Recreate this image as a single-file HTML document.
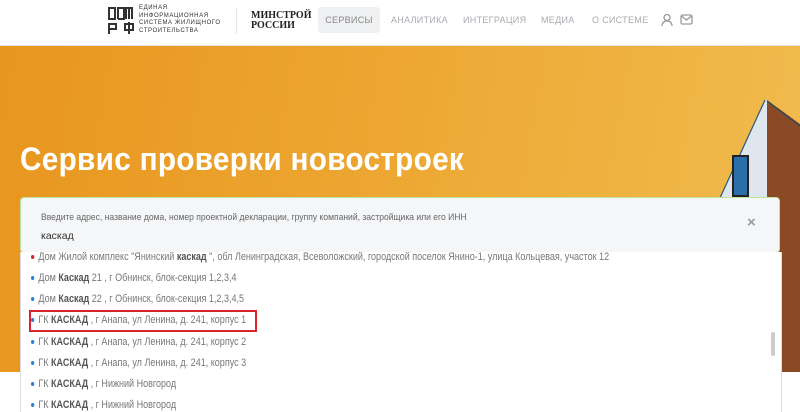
<!DOCTYPE html>
<html><head><meta charset="utf-8"><style>
body{margin:0;width:800px;height:405px;overflow:hidden;background:#fff;font-family:"Liberation Sans","DejaVu Sans",sans-serif;position:relative}
.hdr{position:absolute;left:0;top:0;width:800px;height:45px;background:#fff;border-bottom:1px solid #e5e5e5}
.hero{position:absolute;left:0;top:46px;width:800px;height:326px;background:linear-gradient(100deg,#e8961e 0%,#eda833 50%,#f0bc4f 100%);overflow:hidden}
.nav{position:absolute;top:7px;height:26px;font-size:9px;letter-spacing:.3px;color:#a8abb0;line-height:26px}
h1{position:absolute;left:20px;top:141px;margin:0;color:#fff;font-size:32px;font-weight:bold;letter-spacing:.3px;transform:scaleX(.93);transform-origin:0 0;white-space:nowrap}
.inp{position:absolute;left:20px;top:197px;width:758px;height:54px;background:#f5f6f8;border:1px solid #bfe39a;border-radius:4px}
.list{position:absolute;left:20px;top:252px;width:760px;height:160px;background:#fff;border-left:1px solid #ddd;border-right:1px solid #ddd;overflow:hidden}
.it{position:absolute;left:10px;font-size:11px;color:#777;white-space:nowrap;transform:scaleX(.82);transform-origin:0 50%}
.it b{color:#555}
.it:before{content:"";display:inline-block;width:4px;height:4px;border-radius:2px;background:#2b7de0;margin-right:5px;vertical-align:middle}
.it.r:before{background:#e02020}
</style></head><body>
<div class="hdr">
 <svg style="position:absolute;left:108px;top:5px" width="26" height="30" viewBox="0 0 26 30"><g fill="none" stroke="#333" stroke-width="2"><path d="M1 14V3h6v11M0 14h8M10 14V3h6v11H10M18 14V3h6v11M21 3v11"/><path d="M1 29V19h7v5H1M17 19h8v6h-8zM21 17v12"/></g></svg>
 <div style="position:absolute;left:139px;top:5px;font-size:6px;line-height:7.5px;color:#333;letter-spacing:.6px">ЕДИНАЯ<br>ИНФОРМАЦИОННАЯ<br>СИСТЕМА ЖИЛИЩНОГО<br>СТРОИТЕЛЬСТВА</div>
 <div style="position:absolute;left:236px;top:8px;width:1px;height:26px;background:#e5e5e5"></div>
 <div style="position:absolute;left:251px;top:11px;font-size:10px;line-height:10px;font-weight:bold;color:#222;font-family:'Liberation Serif',serif">МИНСТРОЙ<br>РОССИИ</div>
 <div class="nav" style="left:318px;width:62px;background:#eff0f2;border-radius:4px;text-align:center;color:#888">СЕРВИСЫ</div>
 <div class="nav" style="left:391px">АНАЛИТИКА</div>
 <div class="nav" style="left:463px">ИНТЕГРАЦИЯ</div>
 <div class="nav" style="left:541px">МЕДИА</div>
 <div class="nav" style="left:592px">О СИСТЕМЕ</div>
 <svg style="position:absolute;left:660px;top:13px" width="14" height="14" viewBox="0 0 14 14" fill="none" stroke="#999" stroke-width="1.3"><circle cx="7" cy="4.5" r="3"/><path d="M2 13c0-3 2-5 5-5s5 2 5 5"/></svg>
 <svg style="position:absolute;left:680px;top:13px" width="13" height="13" viewBox="0 0 13 13" fill="none" stroke="#999" stroke-width="1.3"><rect x="1" y="2" width="11" height="9" rx="1.5"/><path d="M1.5 3l5 4 5-4"/></svg>
</div>
<div class="hero">
 <svg style="position:absolute;left:0;top:0" width="800" height="326"><polygon points="765,54 767,54 767,326 640,326" fill="#dfe6ee"/><line x1="765" y1="54" x2="640" y2="326" stroke="#2a5a7a" stroke-width="1.2"/><polygon points="767,54 800,78 800,326 767,326" fill="#8a4a26"/><line x1="767" y1="55" x2="800" y2="80" stroke="#2a4a5a" stroke-width="1.2"/><rect x="733" y="110" width="15" height="40" fill="#2c6fa8" stroke="#222" stroke-width="2"/></svg>
</div>
<h1>Сервис проверки новостроек</h1>
<div class="inp">
 <div style="position:absolute;left:20px;top:14px;font-size:9.5px;color:#666;white-space:nowrap;transform:scaleX(.9);transform-origin:0 0">Введите адрес, название дома, номер проектной декларации, группу компаний, застройщика или его ИНН</div>
 <div style="position:absolute;left:20px;top:32px;font-size:10.5px;color:#333">каскад</div>
 <div style="position:absolute;left:726px;top:16px;font-size:15px;color:#999;font-weight:bold">×</div>
</div>
<div class="list">
 <div class="it r" style="top:-1px">Дом Жилой комплекс "Янинский <b>каскад</b> ", обл Ленинградская, Всеволожский, городской поселок Янино-1, улица Кольцевая, участок 12</div>
 <div class="it" style="top:20px">Дом <b>Каскад</b> 21 , г Обнинск, блок-секция 1,2,3,4</div>
 <div class="it" style="top:41px">Дом <b>Каскад</b> 22 , г Обнинск, блок-секция 1,2,3,4,5</div>
 <div class="it" style="top:62px">ГК <b>КАСКАД</b> , г Анапа, ул Ленина, д. 241, корпус 1</div>
 <div style="position:absolute;left:8px;top:58px;width:224px;height:18px;border:2px solid #d9232d"></div>
 <div class="it" style="top:84px">ГК <b>КАСКАД</b> , г Анапа, ул Ленина, д. 241, корпус 2</div>
 <div class="it" style="top:105px">ГК <b>КАСКАД</b> , г Анапа, ул Ленина, д. 241, корпус 3</div>
 <div class="it" style="top:126px">ГК <b>КАСКАД</b> , г Нижний Новгород</div>
 <div class="it" style="top:147px">ГК <b>КАСКАД</b> , г Нижний Новгород</div>
 <div style="position:absolute;left:750px;top:80px;width:4px;height:24px;background:#ccc;border-radius:2px"></div>
</div>
</body></html>
